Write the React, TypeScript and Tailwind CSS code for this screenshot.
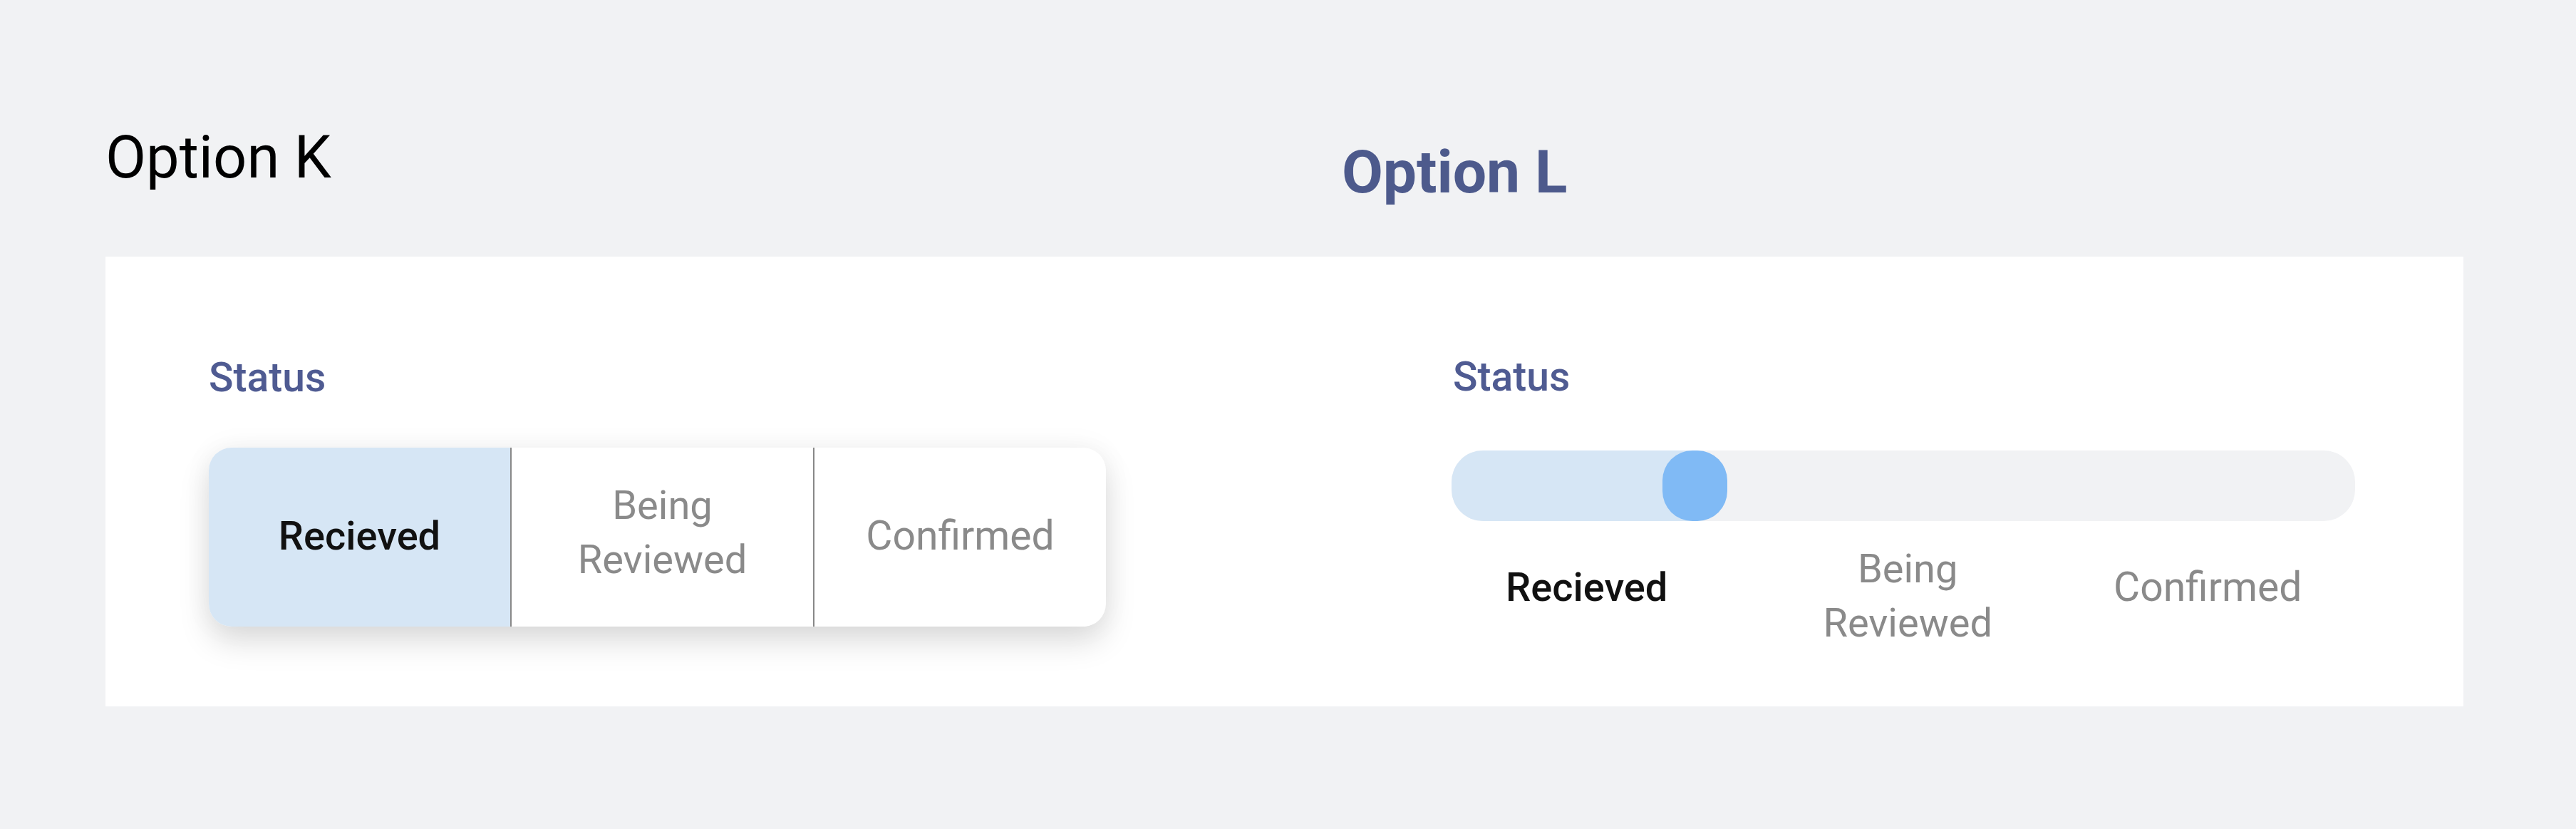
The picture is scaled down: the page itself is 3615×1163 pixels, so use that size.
import React from "react";

const font = { fontFamily: "Roboto, 'Noto Sans', sans-serif" };

function Segmented() {
  return (
    <div className="flex h-[251px] w-[1259px] overflow-hidden rounded-[32px] bg-white shadow-[0_22px_44px_rgba(0,0,0,0.13),0_0_40px_rgba(0,0,0,0.05)]">
      <div className="flex w-[423px] items-center justify-center bg-[#d6e6f5] pb-[4px]">
        <span className="text-[56px] leading-[76px] font-medium text-[#111]">Recieved</span>
      </div>
      <div className="flex w-[425px] items-center justify-center border-l-2 border-[#888] pb-[14px]">
        <span className="text-center text-[56px] leading-[76px] text-[#8a8a8a]">
          Being
          <br />
          Reviewed
        </span>
      </div>
      <div className="flex flex-1 items-center justify-center border-l-2 border-[#888] pb-[4px]">
        <span className="text-[57px] leading-[76px] text-[#8a8a8a]">Confirmed</span>
      </div>
    </div>
  );
}

function Slider() {
  return (
    <div className="flex flex-col">
      <div className="relative h-[99px] w-[1268px] overflow-hidden rounded-[44px] bg-[#f1f2f4]">
        <div className="h-full w-[341px] bg-[#d6e6f5]" />
        <div className="absolute left-[296px] top-0 h-full w-[91px] rounded-[42px] bg-[#80baf5]" />
      </div>
      <div className="mt-[29px] flex items-start pl-[76px]">
        <span className="mt-[26px] text-[56px] leading-[76px] font-medium text-[#111]">Recieved</span>
        <span className="ml-[218px] text-center text-[56px] leading-[76px] text-[#8a8a8a]">
          Being
          <br />
          Reviewed
        </span>
        <span className="ml-[170px] mt-[26px] text-[57px] leading-[76px] text-[#8a8a8a]">Confirmed</span>
      </div>
    </div>
  );
}

export default function App() {
  return (
    <div className="h-[1163px] w-[3615px] bg-[#f1f2f4] pl-[148px] pt-[172px]" style={font}>
      <div className="flex h-[188px] items-start">
        <div className="text-[83px] leading-[98px] text-black">Option K</div>
        <div className="ml-[1418px] mt-[21px] text-[84px] leading-[98px] font-bold text-[#4d5a8c]">Option L</div>
      </div>
      <div className="flex h-[631px] w-[3309px] bg-white">
        <div className="w-[1889px] pl-[145px] pt-[137px]">
          <div className="text-[57px] leading-[66px] font-medium text-[#4f5b92]">Status</div>
          <div className="mt-[65px]">
            <Segmented />
          </div>
        </div>
        <div className="w-[1268px] pt-[136px]">
          <div className="pl-[2px] text-[57px] leading-[66px] font-medium text-[#4f5b92]">Status</div>
          <div className="mt-[70px]">
            <Slider />
          </div>
        </div>
      </div>
    </div>
  );
}
